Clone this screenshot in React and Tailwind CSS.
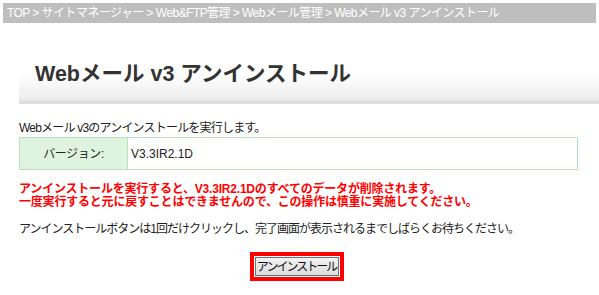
import React from "react";

const App = () => {
  return (
    <div className="w-[599px] h-[295px] bg-white overflow-hidden font-['Liberation_Sans','Noto_Sans_CJK_JP',sans-serif] text-[#222]">
      {/* Breadcrumb */}
      <div className="mx-[3px] mt-[3px] h-[20px] bg-[#bebebe] text-white text-[12px] leading-[20px] pl-[4px] tracking-[-0.55px] whitespace-nowrap">
        TOP &gt; サイトマネージャー &gt; Web&amp;FTP管理 &gt; Webメール管理 &gt; Webメール v3 アンインストール
      </div>

      <div className="pl-[19px]">
        {/* Heading */}
        <div className="mt-[27px]">
          <div className="h-[49px] bg-gradient-to-b from-white from-50% to-[#ededed] flex items-center pl-[16px]">
            <h1 className="text-[21.5px] font-bold text-[#333] leading-none">
              Webメール v3 アンインストール
            </h1>
          </div>
          <div className="h-[2px] bg-[#e9e9e9]" />
          <div className="h-[3px] bg-[#dedede]" />
        </div>

        <p className="mt-[17px] text-[12px] leading-[14px] tracking-[-0.8px]">
          Webメール v3のアンインストールを実行します。
        </p>

        {/* Version table */}
        <div className="mt-[2px] w-[559px] h-[33px] border border-[#b8e2b8] flex text-[12px]">
          <div className="w-[108px] bg-[#dff4df] border-r border-[#b8e2b8] flex items-center justify-center tracking-[-0.4px]">
            バージョン:
          </div>
          <div className="flex items-center pl-[3px]">V3.3IR2.1D</div>
        </div>

        <div className="mt-[13px] text-[12px] leading-[13px] font-bold text-[#ff0000] tracking-[-0.2px]">
          <p>アンインストールを実行すると、V3.3IR2.1Dのすべてのデータが削除されます。</p>
          <p>一度実行すると元に戻すことはできませんので、この操作は慎重に実施してください。</p>
        </div>

        <p className="mt-[13px] text-[12px] leading-[14px] tracking-[-1px]">
          アンインストールボタンは1回だけクリックし、完了画面が表示されるまでしばらくお待ちください。
        </p>

        {/* Button */}
        <div className="mt-[16px] flex justify-center pr-[25px]">
          <div className="border-[4px] border-[#ff0000] p-[1px] bg-white">
            <button className="w-[84px] h-[19px] border border-[#707070] bg-gradient-to-b from-[#f2f2f2] to-[#dcdcdc] text-[12px] leading-none tracking-[-2px] text-[#111] flex items-center justify-center">
              アンインストール
            </button>
          </div>
        </div>
      </div>
    </div>
  );
};

export default App;
